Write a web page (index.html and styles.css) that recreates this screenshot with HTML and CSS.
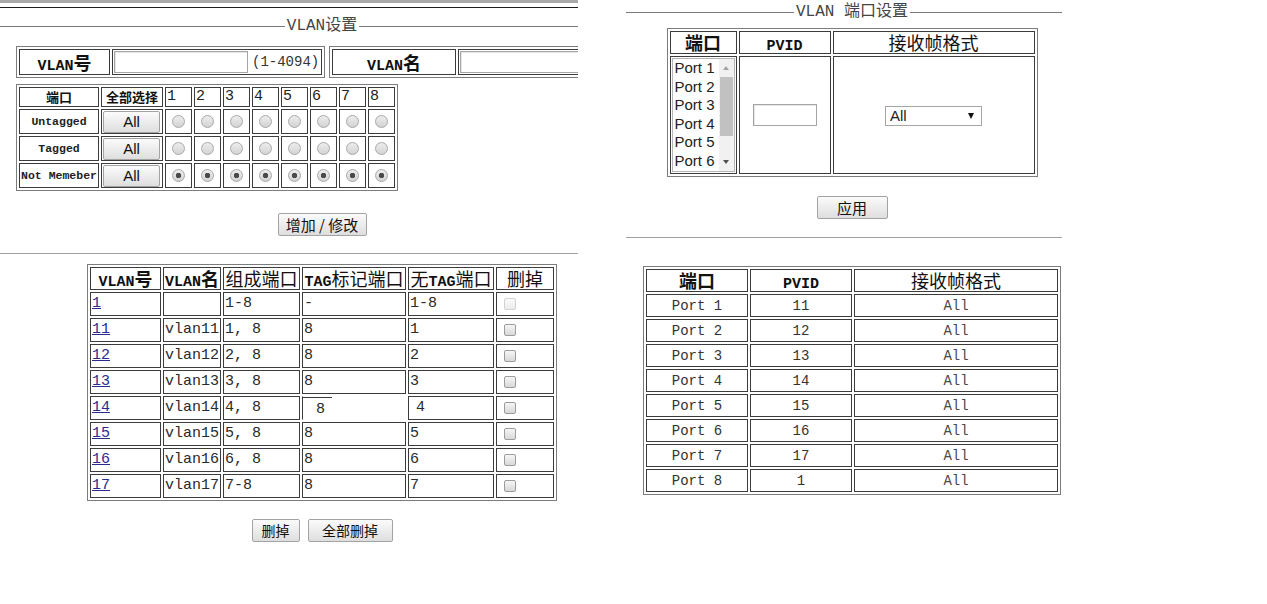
FILE: index.html
```html
<!DOCTYPE html>
<html lang="zh-CN">
<head>
  <meta charset="UTF-8" />
  <meta name="viewport" content="width=device-width, initial-scale=1.0"/>
  <title>VLAN设置</title>
  <link rel="stylesheet" href="styles.css">
</head>
<body>
  <div class="frames">

    <!-- VLAN settings frame -->
    <div class="frame frame-vlan">
      <div class="frame-inner">
        <div class="topbar"></div>
        <div class="legend legend-vlan"><span>VLAN设置</span></div>

        <div class="vlan-head">
          <table class="grid t-id">
            <tr>
              <th class="w-id"><span class="en">VLAN</span>号</th>
              <td class="w-idval"><input type="text" class="txt txt-id"><span class="range">(1-4094)</span></td>
            </tr>
          </table>
          <table class="grid t-name">
            <tr>
              <th class="w-name"><span class="en">VLAN</span>名</th>
              <td class="w-nameval"><input type="text" class="txt txt-id"></td>
            </tr>
          </table>
        </div>

        <table class="grid t-ports">
          <tr class="r-head">
            <th class="w-lbl h-small">端口</th>
            <th class="w-all h-small">全部选择</th>
            <td class="w-port num">1</td>
            <td class="w-port num">2</td>
            <td class="w-port num">3</td>
            <td class="w-port num">4</td>
            <td class="w-port num">5</td>
            <td class="w-port num">6</td>
            <td class="w-port num">7</td>
            <td class="w-port num">8</td>
          </tr>
          <tr>
            <th class="lbl">Untagged</th>
            <td><button class="btn btn-all">All</button></td>
            <td class="c"><input type="radio" class="radio" name="p1"></td>
            <td class="c"><input type="radio" class="radio" name="p2"></td>
            <td class="c"><input type="radio" class="radio" name="p3"></td>
            <td class="c"><input type="radio" class="radio" name="p4"></td>
            <td class="c"><input type="radio" class="radio" name="p5"></td>
            <td class="c"><input type="radio" class="radio" name="p6"></td>
            <td class="c"><input type="radio" class="radio" name="p7"></td>
            <td class="c"><input type="radio" class="radio" name="p8"></td>
          </tr>
          <tr>
            <th class="lbl">Tagged</th>
            <td><button class="btn btn-all">All</button></td>
            <td class="c"><input type="radio" class="radio" name="p1"></td>
            <td class="c"><input type="radio" class="radio" name="p2"></td>
            <td class="c"><input type="radio" class="radio" name="p3"></td>
            <td class="c"><input type="radio" class="radio" name="p4"></td>
            <td class="c"><input type="radio" class="radio" name="p5"></td>
            <td class="c"><input type="radio" class="radio" name="p6"></td>
            <td class="c"><input type="radio" class="radio" name="p7"></td>
            <td class="c"><input type="radio" class="radio" name="p8"></td>
          </tr>
          <tr>
            <th class="lbl">Not Memeber</th>
            <td><button class="btn btn-all">All</button></td>
            <td class="c"><input type="radio" class="radio" name="p1" checked></td>
            <td class="c"><input type="radio" class="radio" name="p2" checked></td>
            <td class="c"><input type="radio" class="radio" name="p3" checked></td>
            <td class="c"><input type="radio" class="radio" name="p4" checked></td>
            <td class="c"><input type="radio" class="radio" name="p5" checked></td>
            <td class="c"><input type="radio" class="radio" name="p6" checked></td>
            <td class="c"><input type="radio" class="radio" name="p7" checked></td>
            <td class="c"><input type="radio" class="radio" name="p8" checked></td>
          </tr>
        </table>

        <div class="actions actions-add">
          <button class="btn btn-add">增加 / 修改</button>
        </div>

        <hr class="sep sep-vlan">

        <table class="grid t-list">
          <tr class="r-head">
            <th class="l1"><span class="en">VLAN</span>号</th>
            <th class="l2"><span class="en">VLAN</span>名</th>
            <th class="l3 thin">组成端口</th>
            <th class="l4 thin"><span class="en">TAG</span>标记端口</th>
            <th class="l5 thin">无<span class="en">TAG</span>端口</th>
            <th class="l6 thin">删掉</th>
          </tr>
          <tr>
            <td><a href="#">1</a></td>
            <td></td>
            <td>1-8</td>
            <td>-</td>
            <td>1-8</td>
            <td><input type="checkbox" class="chk" disabled></td>
          </tr>
          <tr>
            <td><a href="#">11</a></td>
            <td>vlan11</td>
            <td>1, 8</td>
            <td>8</td>
            <td>1</td>
            <td><input type="checkbox" class="chk"></td>
          </tr>
          <tr>
            <td><a href="#">12</a></td>
            <td>vlan12</td>
            <td>2, 8</td>
            <td>8</td>
            <td>2</td>
            <td><input type="checkbox" class="chk"></td>
          </tr>
          <tr>
            <td><a href="#">13</a></td>
            <td>vlan13</td>
            <td>3, 8</td>
            <td>8</td>
            <td>3</td>
            <td><input type="checkbox" class="chk"></td>
          </tr>
          <tr>
            <td><a href="#">14</a></td>
            <td>vlan14</td>
            <td>4, 8</td>
            <td class="loose">8</td>
            <td class="indent">4</td>
            <td><input type="checkbox" class="chk"></td>
          </tr>
          <tr>
            <td><a href="#">15</a></td>
            <td>vlan15</td>
            <td>5, 8</td>
            <td>8</td>
            <td>5</td>
            <td><input type="checkbox" class="chk"></td>
          </tr>
          <tr>
            <td><a href="#">16</a></td>
            <td>vlan16</td>
            <td>6, 8</td>
            <td>8</td>
            <td>6</td>
            <td><input type="checkbox" class="chk"></td>
          </tr>
          <tr>
            <td><a href="#">17</a></td>
            <td>vlan17</td>
            <td>7-8</td>
            <td>8</td>
            <td>7</td>
            <td><input type="checkbox" class="chk"></td>
          </tr>
        </table>

        <div class="actions actions-del">
          <button class="btn btn-del">删掉</button>
          <button class="btn btn-delall">全部删掉</button>
        </div>
      </div>
    </div>

    <!-- Port settings frame -->
    <div class="frame frame-port">
      <div class="frame-inner">
        <div class="legend legend-port"><span>VLAN 端口设置</span></div>

        <table class="grid t-pvid">
          <tr class="r-head">
            <th class="p1">端口</th>
            <th class="p2"><span class="en">PVID</span></th>
            <th class="p3 thin">接收帧格式</th>
          </tr>
          <tr class="r-body">
            <td>
              <div class="listbox">
                <ul class="items">
                  <li>Port 1</li>
                  <li>Port 2</li>
                  <li>Port 3</li>
                  <li>Port 4</li>
                  <li>Port 5</li>
                  <li>Port 6</li>
                </ul>
                <div class="sbar">
                  <span class="arr arr-up"></span>
                  <span class="thumb"></span>
                  <span class="arr arr-down"></span>
                </div>
              </div>
            </td>
            <td class="c"><input type="text" class="txt txt-pvid"></td>
            <td class="c">
              <div class="select"><span>All</span><span class="caret"></span></div>
            </td>
          </tr>
        </table>

        <div class="actions actions-apply">
          <button class="btn btn-apply">应用</button>
        </div>

        <hr class="sep sep-port">

        <table class="grid t-status">
          <tr class="r-head">
            <th class="s1">端口</th>
            <th class="s2"><span class="en">PVID</span></th>
            <th class="s3 thin">接收帧格式</th>
          </tr>
          <tr><td>Port 1</td><td>11</td><td class="fmt">All</td></tr>
          <tr><td>Port 2</td><td>12</td><td class="fmt">All</td></tr>
          <tr><td>Port 3</td><td>13</td><td class="fmt">All</td></tr>
          <tr><td>Port 4</td><td>14</td><td class="fmt">All</td></tr>
          <tr><td>Port 5</td><td>15</td><td class="fmt">All</td></tr>
          <tr><td>Port 6</td><td>16</td><td class="fmt">All</td></tr>
          <tr><td>Port 7</td><td>17</td><td class="fmt">All</td></tr>
          <tr><td>Port 8</td><td>1</td><td class="fmt">All</td></tr>
        </table>
      </div>
    </div>

  </div>
</body>
</html>
```

FILE: styles.css
```css
body {
  margin: 0;
  background: #fff;
  color: #222;
  font-family: "Noto Sans CJK SC", sans-serif;
}

.frames {
  display: flex;
  gap: 48px;
}

.frame {
  flex-shrink: 0;
  overflow: hidden;
}

.frame-vlan { width: 578px; }
.frame-vlan .frame-inner { width: 644px; }

.frame-port { width: 436px; }
.frame-port .frame-inner { width: 452px; }

.topbar {
  height: 4px;
  border-top: 3px solid #a9a9a9;
  border-bottom: 1px solid #1e1e1e;
}

/* centered title with a rule on both sides */
.legend {
  display: flex;
  align-items: center;
  height: 20px;
  font: 16px/20px "Liberation Mono", "Noto Sans CJK SC", monospace;
  color: #444;
}

.legend::before,
.legend::after {
  content: "";
  flex: 1;
  border-top: 1px solid #7a7a7a;
}

.legend span {
  padding: 0 2px;
  white-space: pre;
}

.legend-vlan { margin-top: 8px; }
.legend-port { margin-top: 2px; }

/* bordered tables */
.grid {
  border-collapse: separate;
  border-spacing: 2px;
  border: 1px solid #7c7c7c;
  table-layout: fixed;
}

.grid th,
.grid td {
  box-sizing: border-box;
  border: 1px solid #3c3c3c;
  padding: 0 1px;
  line-height: 18px;
  white-space: nowrap;
}

.grid th {
  font: bold 18px/17px "Noto Sans CJK SC", sans-serif;
  color: #111;
  text-align: center;
}

.grid th.thin { font-weight: normal; }

.grid .en {
  font: bold 15px/0 "Liberation Mono", monospace;
}

.grid td.c { text-align: center; }

/* VLAN id / name row */
.vlan-head {
  display: flex;
  gap: 4px;
  margin: 10px 0 0 16px;
}

.vlan-head table { flex-shrink: 0; }

.t-id { width: 309px; }
.t-name { width: 362px; }
.t-id tr, .t-name tr { height: 26px; }

.w-id { width: 91px; }
.w-idval { width: 210px; }
.w-name { width: 124px; }
.w-nameval { width: 230px; }

.txt {
  box-sizing: border-box;
  border: 1px solid #a5a5a5;
  box-shadow: inset 1px 1px 0 #e6e6e6;
  background: #fff;
  margin: 0;
  padding: 0;
  vertical-align: middle;
}

.txt-id {
  width: 134px;
  height: 22px;
}

.range {
  margin-left: 4px;
  font: 14px "Liberation Mono", monospace;
  color: #333;
  vertical-align: middle;
}

/* port membership table */
.t-ports {
  width: 382px;
  margin: 6px 0 0 16px;
}

.t-ports tr { height: 25px; }
.t-ports tr.r-head { height: 20px; }

.w-lbl { width: 80px; }
.w-all { width: 62px; }
.w-port { width: 27px; }

.grid th.h-small {
  font-size: 13px;
  line-height: 16px;
}

.grid td.num {
  font: 15px/16px "Liberation Mono", monospace;
  color: #222;
}

.grid th.lbl {
  font: bold 11.5px/16px "Liberation Mono", monospace;
  color: #222;
}

.btn {
  box-sizing: border-box;
  height: 23px;
  margin: 0;
  padding: 0;
  border: 1px solid #a3a3a3;
  border-radius: 2px;
  background: linear-gradient(#fbfbfb, #dedede);
  color: #111;
  font: 14px/21px "Noto Sans CJK SC", sans-serif;
}

.btn-all {
  display: block;
  width: 57px;
  height: 22px;
  font: 15px/20px "Liberation Sans", Arial, sans-serif;
}

.radio {
  appearance: none;
  display: block;
  width: 13px;
  height: 13px;
  margin: 0 auto;
  border: 1px solid #a8a8a8;
  border-radius: 50%;
  background: linear-gradient(#ededed, #d3d3d3);
}

.radio:checked {
  background: radial-gradient(circle, #4a4a4a 0 2.5px, transparent 3px),
              linear-gradient(#ededed, #d3d3d3);
}

.actions {
  display: flex;
  justify-content: center;
  gap: 8px;
}

.actions-add { margin-top: 22px; }
.btn-add { width: 89px; font-size: 15px; }

.sep {
  height: 0;
  margin: 0;
  border: 0;
  border-top: 1px solid #a0a0a0;
}

.sep-vlan { margin-top: 17px; }

/* VLAN list */
.t-list {
  width: 470px;
  margin: 10px auto 0;
}

.t-list tr { height: 24px; }
.t-list tr.r-head { height: 23px; }

.l1 { width: 71px; }
.l2 { width: 58px; }
.l3 { width: 77px; }
.l4 { width: 104px; }
.l5 { width: 86px; }
.l6 { width: 58px; }

.t-list td {
  font: 15px/18px "Liberation Mono", monospace;
  color: #2a2a2a;
  text-align: left;
}

.t-list a {
  color: #2b2b8f;
}

.t-list td.loose {
  border-color: transparent;
  border-left-color: #3c3c3c;
  background: linear-gradient(#3c3c3c, #3c3c3c) top left / 29px 1px no-repeat;
  padding: 4px 0 0 13px;
}

.t-list td.indent { padding-left: 7px; }

.chk {
  appearance: none;
  display: block;
  width: 12px;
  height: 12px;
  margin: 0 0 0 6px;
  border: 1px solid #9c9c9c;
  border-radius: 2px;
  background: linear-gradient(#f6f6f6, #d8d8d8);
}

.chk:disabled {
  border-color: #d2d2d2;
  background: linear-gradient(#fafafa, #ececec);
}

.actions-del { margin-top: 18px; }
.btn-del { width: 48px; }
.btn-delall { width: 85px; }

/* PVID form */
.t-pvid {
  width: 371px;
  margin: 6px auto 0;
}

.t-pvid tr.r-head { height: 23px; }
.t-pvid tr.r-body { height: 118px; }

.p1 { width: 67px; }
.p2 { width: 92px; }
.p3 { width: 202px; }

.t-pvid td { padding: 1px; }

.listbox {
  box-sizing: border-box;
  display: flex;
  width: 63px;
  height: 114px;
  border: 1px solid #b5b5b5;
  background: #fff;
  overflow: hidden;
}

.items {
  flex: 1;
  margin: 0;
  padding: 0 0 0 2px;
  list-style: none;
  font: 15px/18.6px "Liberation Sans", Arial, sans-serif;
  color: #222;
}

.sbar {
  display: flex;
  flex-direction: column;
  align-items: center;
  width: 15px;
  background: #f1f1f1;
}

.arr {
  width: 0;
  height: 0;
  border-left: 3.5px solid transparent;
  border-right: 3.5px solid transparent;
}

.arr-up {
  margin-top: 7px;
  border-bottom: 4px solid #a3a3a3;
}

.arr-down {
  margin-top: auto;
  margin-bottom: 7px;
  border-top: 4px solid #505050;
}

.thumb {
  width: 13px;
  height: 59px;
  margin-top: 7px;
  background: #c1c1c1;
}

.txt-pvid {
  width: 64px;
  height: 22px;
}

.select {
  box-sizing: border-box;
  display: inline-flex;
  align-items: center;
  justify-content: space-between;
  width: 97px;
  height: 20px;
  padding: 0 7px 0 4px;
  border: 1px solid #a6a6a6;
  background: #fff;
  font: 15px/18px "Liberation Sans", Arial, sans-serif;
  color: #222;
  vertical-align: middle;
}

.caret {
  width: 0;
  height: 0;
  border-left: 3.5px solid transparent;
  border-right: 3.5px solid transparent;
  border-top: 6px solid #111;
}

.actions-apply { margin-top: 19px; }
.btn-apply { width: 71px; font-size: 15px; }

.sep-port { margin-top: 18px; }

/* port status table */
.t-status {
  width: 418px;
  margin: 28px auto 0;
}

.t-status tr { height: 23px; }

.s1 { width: 102px; }
.s2 { width: 102px; }
.s3 { width: 204px; }

.t-status td {
  font: 14px/18px "Liberation Mono", monospace;
  color: #333;
  text-align: center;
}

.t-status td.fmt { color: #4a4a4a; }
```
